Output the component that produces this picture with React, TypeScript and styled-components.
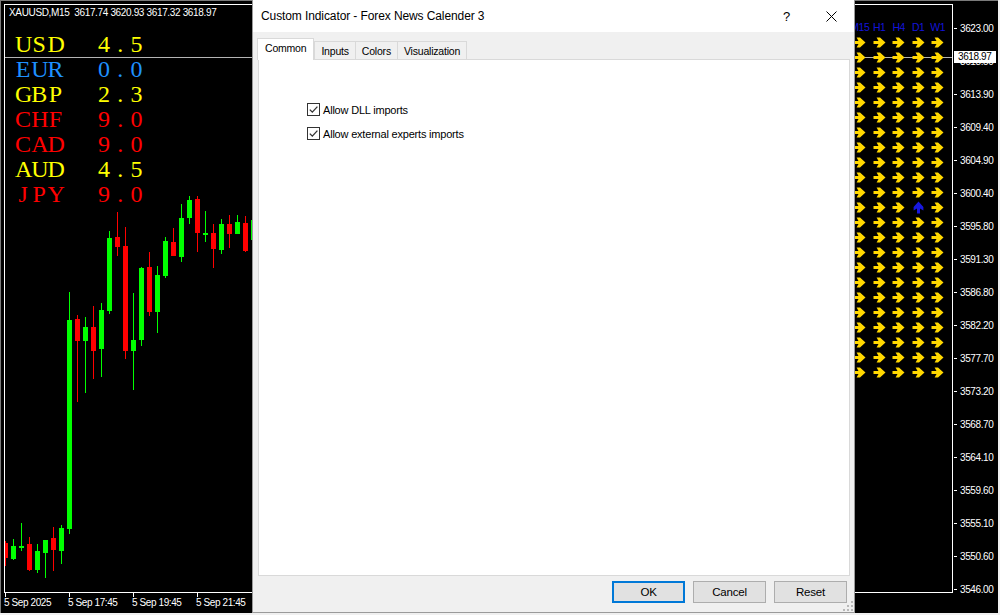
import React from 'react'
import styled, { createGlobalStyle } from 'styled-components'

// x, bodyTop, bodyBottom, wickTop, wickBottom, bullish
type Candle = [number, number, number, number, number, boolean]

const candles: Candle[] = [
    [5, 543, 558, 541, 566, false],
    [13, 546, 559, 539, 560, true],
    [21, 546, 548, 523, 551, true],
    [29, 544, 570, 537, 571, false],
    [37, 551, 570, 544, 573, true],
    [45, 540, 553, 540, 578, true],
    [53, 538, 550, 527, 571, false],
    [61, 528, 551, 525, 564, true],
    [69, 320, 529, 292, 534, true],
    [77, 319, 341, 315, 402, false],
    [85, 327, 341, 317, 393, true],
    [93, 327, 351, 306, 379, false],
    [101, 310, 349, 303, 377, true],
    [109, 238, 311, 231, 314, true],
    [117, 237, 247, 212, 256, false],
    [125, 246, 351, 227, 359, false],
    [133, 340, 351, 293, 390, true],
    [141, 268, 340, 267, 346, true],
    [149, 267, 312, 252, 316, false],
    [157, 275, 312, 266, 333, true],
    [165, 241, 276, 237, 278, true],
    [173, 242, 256, 228, 256, false],
    [181, 218, 257, 204, 262, true],
    [189, 200, 218, 196, 224, true],
    [197, 199, 233, 196, 252, false],
    [205, 233, 235, 211, 242, true],
    [213, 233, 249, 224, 268, false],
    [221, 224, 250, 219, 254, true],
    [229, 224, 234, 215, 248, false],
    [237, 222, 234, 215, 234, true],
    [245, 223, 251, 216, 252, false],
    [253, 220, 240, 214, 246, true],
]

const currencies = [
    { name: 'USD', value: '4.5', color: '#ffff00' },
    { name: 'EUR', value: '0.0', color: '#1e90ff' },
    { name: 'GBP', value: '2.3', color: '#ffff00' },
    { name: 'CHF', value: '9.0', color: '#ff0000' },
    { name: 'CAD', value: '9.0', color: '#ff0000' },
    { name: 'AUD', value: '4.5', color: '#ffff00' },
    { name: 'JPY', value: '9.0', color: '#ff0000' },
]

const prices = [
    '3623.00', '3618.50', '3613.90', '3609.40', '3604.90', '3600.40',
    '3595.80', '3591.30', '3586.80', '3582.20', '3577.70', '3573.20',
    '3568.70', '3564.10', '3559.60', '3555.10', '3550.60', '3546.00',
]

const times = ['5 Sep 2025', '5 Sep 17:45', '5 Sep 19:45', '5 Sep 21:45']
const frames = ['M15', 'H1', 'H4', 'D1', 'W1']
const ARROW_ROWS = 23

const GlobalStyle = createGlobalStyle`
    html, body {
        margin: 0;
        padding: 0;
        background: #f0f0f0;
    }
    body {
        width: 1000px;
        height: 615px;
        overflow: hidden;
    }
    * {
        box-sizing: border-box;
    }
`

function MonoText({ text }: { text: string }) {
    return (
        <>
            {text.split('').map((ch, i) => (
                <MonoCell key={i}>{ch}</MonoCell>
            ))}
        </>
    )
}

function Arrow({ color, up }: { color: string; up?: boolean }) {
    return (
        <ArrowSvg $up={up} width="13" height="11" viewBox="0 0 13 11">
            <path d="M0.5 4 H5.5 L3.6 0.6 H7 L12.5 5.5 L7 10.4 H3.6 L5.5 7 H0.5 Z" fill={color} />
        </ArrowSvg>
    )
}

function CandleChart() {
    return (
        <ChartSvg viewBox="5 5 947 587" width={947} height={587} shapeRendering="crispEdges">
            <rect x={5} y={57} width={947} height={1} fill="#b4b4b4" />
            {candles.map(([x, bt, bb, wt, wb, up]) => (
                <g key={x} fill={up ? '#00ff00' : '#ff0000'}>
                    <rect x={x} y={wt} width={1} height={wb - wt} />
                    <rect x={x - 2} y={bt} width={5} height={Math.max(bb - bt, 2)} />
                </g>
            ))}
        </ChartSvg>
    )
}

function Checkbox({ label }: { label: string }) {
    return (
        <CheckRow>
            <CheckBox>
                <svg width="11" height="11" viewBox="0 0 11 11">
                    <path d="M1.8 5.6 L4.3 8.1 L9.4 2.6" fill="none" stroke="#333" strokeWidth="1.3" />
                </svg>
            </CheckBox>
            <span>{label}</span>
        </CheckRow>
    )
}

export default function App() {
    return (
        <Desktop>
            <GlobalStyle />
            <ChartWindow>
                <ChartBody>
                    <Plot>
                        <CandleChart />
                        <SymbolInfo>XAUUSD,M15  3617.74 3620.93 3617.32 3618.97</SymbolInfo>
                        <CurrencyList>
                            {currencies.map((c) => (
                                <CurrencyRow key={c.name} $color={c.color}>
                                    <CurrencyName>
                                        <MonoText text={c.name} />
                                    </CurrencyName>
                                    <MonoText text={c.value} />
                                </CurrencyRow>
                            ))}
                        </CurrencyList>
                        <SignalGrid>
                            {frames.map((f) => (
                                <FrameLabel key={f}>{f}</FrameLabel>
                            ))}
                            {Array.from({ length: ARROW_ROWS * frames.length }).map((_, i) => {
                                const up = Math.floor(i / 5) === 11 && i % 5 === 3
                                return <Arrow key={i} up={up} color={up ? '#1818e0' : '#ffd700'} />
                            })}
                        </SignalGrid>
                    </Plot>
                    <PriceAxis>
                        {prices.map((p) => (
                            <PriceTick key={p}>
                                <TickMark />
                                {p}
                            </PriceTick>
                        ))}
                        <CurrentPrice>3618.97</CurrentPrice>
                    </PriceAxis>
                </ChartBody>
                <TimeAxis>
                    {times.map((t) => (
                        <TimeCell key={t}>
                            <TimeTick />
                            <span>{t}</span>
                        </TimeCell>
                    ))}
                </TimeAxis>
            </ChartWindow>

            <Dialog>
                <TitleBar>
                    <Title>Custom Indicator - Forex News Calender 3</Title>
                    <TitleButton>?</TitleButton>
                    <TitleButton>
                        <svg width="11" height="11" viewBox="0 0 11 11">
                            <path d="M0.5 0.5 L10.5 10.5 M10.5 0.5 L0.5 10.5" stroke="#000" strokeWidth="1" />
                        </svg>
                    </TitleButton>
                </TitleBar>
                <DialogBody>
                    <TabStrip>
                        <Tab $active>Common</Tab>
                        <Tab>Inputs</Tab>
                        <Tab>Colors</Tab>
                        <Tab>Visualization</Tab>
                    </TabStrip>
                    <TabPanel>
                        <Checkbox label="Allow DLL imports" />
                        <Checkbox label="Allow external experts imports" />
                    </TabPanel>
                    <Footer>
                        <Button $primary>OK</Button>
                        <Button>Cancel</Button>
                        <Button>Reset</Button>
                    </Footer>
                </DialogBody>
                <SizeGrip width="10" height="10" viewBox="0 0 10 10">
                    <g fill="#b8b8b8">
                        <rect x="8" y="0" width="2" height="2" />
                        <rect x="4" y="4" width="2" height="2" />
                        <rect x="8" y="4" width="2" height="2" />
                        <rect x="0" y="8" width="2" height="2" />
                        <rect x="4" y="8" width="2" height="2" />
                        <rect x="8" y="8" width="2" height="2" />
                    </g>
                </SizeGrip>
            </Dialog>
        </Desktop>
    )
}

const Desktop = styled.div`
    position: relative;
    width: 1000px;
    height: 615px;
    background: #f0f0f0;
`

const ChartWindow = styled.div`
    width: 998px;
    height: 613px;
    background: #000;
    border-left: 1px solid #7a7a7a;
    border-top: 1px solid #7a7a7a;
    padding: 3px 0 0 3px;
    display: flex;
    flex-direction: column;
    font-family: 'Liberation Sans', Arial, sans-serif;
    font-size: 10px;
    letter-spacing: -0.4px;
    color: #fff;
`

const ChartBody = styled.div`
    display: flex;
    height: 589px;
`

const Plot = styled.div`
    position: relative;
    width: 949px;
    height: 589px;
    border: 1px solid #fff;
    overflow: hidden;
`

const ChartSvg = styled.svg`
    position: absolute;
    top: 0;
    left: 0;
    display: block;
`

const SymbolInfo = styled.div`
    position: absolute;
    left: 4px;
    top: 2px;
    line-height: 12px;
    white-space: pre;
    letter-spacing: -0.35px;
`

const CurrencyList = styled.div`
    position: absolute;
    left: 10px;
    top: 27px;
    display: flex;
    flex-direction: column;
`

const CurrencyRow = styled.div<{ $color: string }>`
    display: flex;
    height: 25px;
    line-height: 25px;
    color: ${(p) => p.$color};
    font-family: 'Liberation Serif', 'Times New Roman', serif;
    font-size: 24px;
    letter-spacing: 0;
`

const CurrencyName = styled.div`
    display: flex;
    width: 81px;
`

const MonoCell = styled.span`
    display: inline-block;
    width: 16.2px;
    text-align: center;
`

const SignalGrid = styled.div`
    position: absolute;
    left: 845px;
    top: 15px;
    display: grid;
    grid-template-columns: repeat(5, 19.5px);
    grid-auto-rows: 15px;
    place-items: center;
`

const FrameLabel = styled.span`
    color: #1414d8;
    font-size: 10.5px;
    line-height: 15px;
`

const ArrowSvg = styled.svg<{ $up?: boolean }>`
    display: block;
    transform: ${(p) => (p.$up ? 'rotate(-90deg)' : 'none')};
`

const PriceAxis = styled.div`
    position: relative;
    flex: 1;
    padding-top: 8px;
`

const PriceTick = styled.div`
    display: flex;
    align-items: center;
    height: 33px;
`

const TickMark = styled.span`
    width: 3px;
    height: 1px;
    margin: 0 3px 0 1px;
    background: #fff;
`

const CurrentPrice = styled.div`
    position: absolute;
    left: 1px;
    top: 47px;
    width: 42px;
    height: 12px;
    line-height: 12px;
    padding-left: 4px;
    background: #fff;
    color: #000;
`

const TimeAxis = styled.div`
    display: flex;
    height: 20px;
`

const TimeCell = styled.div`
    display: flex;
    flex-direction: column;
    width: 64px;
    line-height: 11px;
    white-space: nowrap;
`

const TimeTick = styled.span`
    width: 1px;
    height: 4px;
    margin: 0 0 0 1px;
    background: #fff;
`

const Dialog = styled.div`
    position: absolute;
    left: 252px;
    top: 0;
    width: 603px;
    height: 613px;
    display: flex;
    flex-direction: column;
    background: #f0f0f0;
    border: 1px solid #9a9a9a;
    border-top: none;
    font-family: 'Liberation Sans', Arial, sans-serif;
    font-size: 11px;
    letter-spacing: -0.2px;
    color: #000;
    z-index: 2;
`

const TitleBar = styled.div`
    display: flex;
    align-items: center;
    height: 32px;
    padding-left: 8px;
    background: #fff;
`

const Title = styled.div`
    flex: 1;
    font-size: 12px;
    letter-spacing: -0.1px;
`

const TitleButton = styled.div`
    display: flex;
    align-items: center;
    justify-content: center;
    width: 45px;
    height: 32px;
    font-size: 13px;
`

const DialogBody = styled.div`
    flex: 1;
    display: flex;
    flex-direction: column;
    padding: 0 4px 0 5px;
`

const TabStrip = styled.div`
    display: flex;
    align-items: flex-end;
    height: 27px;
    margin-left: -1px;
`

const Tab = styled.div<{ $active?: boolean }>`
    position: relative;
    display: flex;
    align-items: center;
    justify-content: center;
    height: ${(p) => (p.$active ? '22px' : '18px')};
    padding: ${(p) => (p.$active ? '0 7px 3px' : '0 6px')};
    margin-bottom: ${(p) => (p.$active ? '-1px' : '0')};
    margin-left: ${(p) => (p.$active ? '0' : '-1px')};
    background: ${(p) => (p.$active ? '#fff' : '#f0f0f0')};
    border: 1px solid #d9d9d9;
    border-bottom: none;
    font-size: 10.5px;
    z-index: ${(p) => (p.$active ? 2 : 1)};

    &:nth-child(2) {
        margin-left: 0;
    }
`

const TabPanel = styled.div`
    flex: 1;
    display: flex;
    flex-direction: column;
    gap: 11px;
    padding: 43px 0 0 48px;
    background: #fff;
    border: 1px solid #d9d9d9;
`

const CheckRow = styled.div`
    display: flex;
    align-items: center;
    gap: 3px;
    height: 13px;
`

const CheckBox = styled.span`
    display: flex;
    align-items: center;
    justify-content: center;
    width: 13px;
    height: 13px;
    border: 1px solid #333;
    background: #fff;
`

const Footer = styled.div`
    display: flex;
    justify-content: flex-end;
    gap: 8px;
    padding: 5px 3px 9px 0;
`

const Button = styled.div<{ $primary?: boolean }>`
    display: flex;
    align-items: center;
    justify-content: center;
    width: 73px;
    height: 22px;
    background: #e1e1e1;
    border: ${(p) => (p.$primary ? '2px solid #0078d7' : '1px solid #adadad')};
    font-size: 11.5px;
`

const SizeGrip = styled.svg`
    position: absolute;
    right: 1px;
    bottom: 1px;
`
